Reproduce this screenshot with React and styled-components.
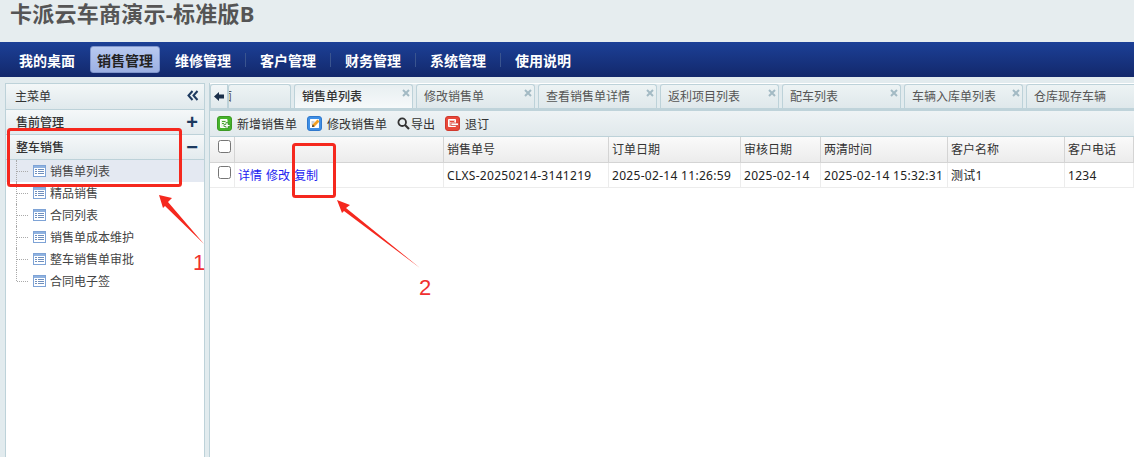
import React from "react"
import styled, { createGlobalStyle } from "styled-components"

const FONT = `"Noto Sans", "Noto Sans CJK SC", sans-serif`

const GlobalStyle = createGlobalStyle`
  html, body {
    margin: 0;
    height: 100%;
    overflow: hidden;
    background: #e2ebee;
    font-family: ${FONT};
    font-size: 12px;
    color: #333;
  }
  * { box-sizing: border-box; }
`

const Page = styled.div`
  position: relative;
  width: 1134px;
  height: 457px;
  display: flex;
  flex-direction: column;
  overflow: hidden;
`

const Header = styled.header`
  height: 42px;
  flex: none;
  padding-left: 10px;
  background: #e6edef;
`

const Title = styled.h1`
  margin: 0;
  font-size: 22px;
  line-height: 27px;
  letter-spacing: 0.25px;
  font-weight: 700;
  color: #555;
`

const NavBar = styled.nav`
  height: 35px;
  flex: none;
  display: flex;
  align-items: center;
  padding-left: 5px;
  background: linear-gradient(#1c4097, #13286b);
`

const NavItem = styled.a`
  width: ${props => (props.$active ? "70px" : "84px")};
  height: ${props => (props.$active ? "27px" : "14px")};
  margin-right: 1px;
  display: flex;
  align-items: center;
  justify-content: center;
  font-size: 14px;
  font-weight: 700;
  color: ${props => (props.$active ? "#222" : "#fff")};
  background: ${props => (props.$active ? "linear-gradient(#b8c9f0, #9cb0e2)" : "none")};
  border: ${props => (props.$active ? "1px solid #7f95cc" : "0")};
  border-radius: ${props => (props.$active ? "3px" : "0")};
  box-shadow: ${props => (props.$sep ? "1px 0 0 #3a548f" : "none")};
`

const Body = styled.div`
  flex: 1;
  min-height: 0;
  display: flex;
  padding-top: 6px;
`

const Sidebar = styled.aside`
  width: 200px;
  flex: none;
  margin-left: 5px;
  background: #fff;
  border: 1px solid #bdd2d9;
  border-bottom: 0;
`

const SideHead = styled.div`
  height: 26px;
  display: flex;
  align-items: center;
  justify-content: space-between;
  padding: 0 5px 2px 9px;
  border-bottom: 1px solid #bdd2d9;
  background: linear-gradient(#f3f7f8, #e0e9ec);
  color: #333;
`

const GroupHead = styled.div`
  height: 25px;
  display: flex;
  align-items: center;
  justify-content: space-between;
  padding: 0 6px 0 10px;
  border-bottom: 1px solid #bdd2d9;
  background: linear-gradient(#f5f8f9, #e3ebee);
  color: #333;
  font-weight: 500;
`

const GroupSign = styled.span`
  font-size: 20px;
  line-height: 20px;
  font-family: "Liberation Sans", sans-serif;
  font-weight: 700;
  color: #1d3a5f;
`

const Tree = styled.ul`
  margin: 0;
  padding: 0;
  list-style: none;
`

const TreeItem = styled.li`
  position: relative;
  height: 22px;
  display: flex;
  align-items: center;
  gap: 4px;
  padding-left: 27px;
  background: ${props => (props.$active ? "#e4e9f2" : "transparent")};
  color: #444;
  &::before {
    content: "";
    position: absolute;
    left: 10px;
    top: 0;
    height: ${props => (props.$last ? "11px" : "22px")};
    border-left: 1px dotted #aaa;
  }
  &::after {
    content: "";
    position: absolute;
    left: 11px;
    top: 11px;
    width: 11px;
    border-top: 1px dotted #aaa;
  }
`

const Main = styled.main`
  width: 925px;
  flex: none;
  margin-left: 4px;
  padding-top: 1px;
  display: flex;
  flex-direction: column;
  background: #fff;
  border-left: 1px solid #bdd2d9;
`

const TabBar = styled.div`
  height: 27px;
  flex: none;
  display: flex;
  gap: 3px;
  align-items: flex-end;
  background: #e2ebee;
  border-bottom: 3px solid #bfd3da;
  overflow: hidden;
`

const ScrollBtn = styled.div`
  width: 18px;
  height: 24px;
  flex: none;
  margin-right: -3px;
  display: flex;
  align-items: center;
  justify-content: center;
  border: 1px solid #bdd2d9;
  border-bottom: 0;
  border-radius: 3px 0 0 0;
  background: linear-gradient(#f3f7f8, #e0e9ec);
`

const Tab = styled.div`
  position: relative;
  width: ${props => props.$width || 119}px;
  height: 24px;
  flex: none;
  padding: 4px 0 0 7px;
  line-height: 16px;
  white-space: nowrap;
  overflow: hidden;
  color: ${props => (props.$active ? "#333" : "#555")};
  font-weight: ${props => (props.$active ? 500 : 400)};
  border: 1px solid #bdd2d9;
  border-bottom: 0;
  border-radius: 3px 3px 0 0;
  background: ${props => (props.$active ? "linear-gradient(#e8eff1, #f6f9fa)" : "linear-gradient(#edf3f4, #dfe8eb)")};
`

const HiddenTabText = styled.span`
  display: block;
  margin-left: -16px;
  color: #555;
`

const TabClose = styled.svg`
  position: absolute;
  top: 4px;
  right: 2px;
  width: 8px;
  height: 8px;
`

const Toolbar = styled.div`
  height: 26px;
  flex: none;
  display: flex;
  align-items: center;
  gap: 10px;
  padding-left: 7px;
  border-bottom: 1px solid #bdd2d9;
  background: linear-gradient(#eef3f5, #e1e9ec);
`

const ToolBtn = styled.a`
  display: flex;
  align-items: center;
  gap: ${props => props.$gap ?? 5}px;
  color: #333;
`

const Grid = styled.div`
  display: grid;
  grid-template-columns: 25px 209px 165px 132px 80px 127px 117px 69px;
`

const HeadCell = styled.div`
  height: 26px;
  padding: 0 0 2px 3px;
  display: flex;
  align-items: center;
  border-right: 1px solid #d4d4d4;
  border-bottom: 1px solid #d4d4d4;
  background: linear-gradient(#fafafa, #ececec);
  color: #333;
  white-space: nowrap;
`

const BodyCell = styled.div`
  height: 25px;
  padding-left: 3px;
  display: flex;
  align-items: center;
  border-right: 1px solid #ececec;
  border-bottom: 1px solid #ececec;
  color: #222;
  white-space: nowrap;
  letter-spacing: 0.3px;
`

const Check = styled.span`
  width: 13px;
  height: 13px;
  align-self: flex-start;
  margin: 3px 0 0 5px;
  border: 1px solid #767676;
  border-radius: 2.5px;
  background: #fff;
`

const ActionLink = styled.a`
  color: #2222f0;
  margin-right: 4px;
  letter-spacing: 0;
`

const Marks = styled.svg`
  position: absolute;
  left: 0;
  top: 0;
  width: 1134px;
  height: 457px;
  pointer-events: none;
`

const MarkNum = styled.span`
  position: absolute;
  left: ${props => props.$x}px;
  top: ${props => props.$y}px;
  color: #f03030;
  font-family: "Liberation Sans", sans-serif;
  font-size: 22px;
  line-height: 26px;
`

const GridIcon = () => (
  <svg width="13" height="12" viewBox="0 0 13 12">
    <rect x="0.5" y="0.5" width="12" height="11" fill="#fff" stroke="#7ea3d6" />
    <rect x="1" y="1" width="11" height="2" fill="#8fb2e0" />
    <path d="M2 4.500h2M5 4.500h6M2 6.500h2M5 6.500h6M2 8.500h2M5 8.500h6" stroke="#6f8fbd" fill="none" />
  </svg>
)

const CloseIcon = () => (
  <TabClose viewBox="0 0 8 8">
    <path d="M1 1l6 6M7 1L1 7" stroke="#a3bac4" strokeWidth="2" fill="none" />
  </TabClose>
)

const AddIcon = () => (
  <svg width="15" height="15" viewBox="0 0 15 15">
    <rect x="0.5" y="0.5" width="14" height="14" rx="2.5" fill="#46b42c" stroke="#3c9a24" />
    <path d="M3.500 3.500h6.500v8H3.500z" fill="#e9f7e2" stroke="#fff" />
    <path d="M5 5.500h3.500M5 7.500h2" stroke="#4aa62f" fill="none" />
    <path d="M9 6.500h2v2h2v2h-2v2H9v-2H7v-2h2z" fill="#fff" stroke="#2f8a1c" strokeWidth="0.7" />
  </svg>
)

const EditIcon = () => (
  <svg width="15" height="15" viewBox="0 0 15 15">
    <rect x="0.5" y="0.5" width="14" height="14" rx="2.5" fill="#3e8fe6" stroke="#2f78cc" />
    <rect x="3" y="3" width="9" height="9" rx="0.5" fill="#fff" />
    <path d="M4.500 6h3M4.500 8h2" stroke="#9ab" fill="none" />
    <path d="M5 11l.6-2.600L10.500 3.500l2 2-4.900 4.900z" fill="#f2a024" />
    <path d="M5 11l.6-2.600 2 2z" fill="#333" />
  </svg>
)

const SearchIcon = () => (
  <svg width="13" height="13" viewBox="0 0 13 13">
    <circle cx="5.2" cy="5.2" r="3.8" fill="none" stroke="#333" strokeWidth="1.8" />
    <path d="M8 8l4 4" stroke="#333" strokeWidth="2.2" />
  </svg>
)

const UndoIcon = () => (
  <svg width="15" height="15" viewBox="0 0 15 15">
    <rect x="0.5" y="0.5" width="14" height="14" rx="2.5" fill="#e8483a" stroke="#d0382c" />
    <path d="M3.500 3.500h7v7h-7z" fill="#f6c9c3" stroke="#fff" />
    <path d="M5 5.500h4" stroke="#e8483a" fill="none" />
    <rect x="6" y="7" width="7.500" height="2.500" fill="#fff" stroke="#d0382c" strokeWidth="0.7" />
  </svg>
)

const treeItems = ["销售单列表", "精品销售", "合同列表", "销售单成本维护", "整车销售单审批", "合同电子签"]
const tabs = ["修改销售单", "查看销售单详情", "返利项目列表", "配车列表", "车辆入库单列表", "仓库现存车辆"]
const columns = ["销售单号", "订单日期", "审核日期", "两清时间", "客户名称", "客户电话"]
const row = ["CLXS-20250214-3141219", "2025-02-14 11:26:59", "2025-02-14", "2025-02-14 15:32:31", "测试1", "1234"]
const navItems = ["维修管理", "客户管理", "财务管理", "系统管理", "使用说明"]

const App = () => (
  <Page>
    <GlobalStyle />
    <Header>
      <Title>卡派云车商演示-标准版B</Title>
    </Header>
    <NavBar>
      <NavItem>我的桌面</NavItem>
      <NavItem $active>销售管理</NavItem>
      {navItems.map((item, i) => (
        <NavItem key={item} $sep={i < 4}>{item}</NavItem>
      ))}
    </NavBar>
    <Body>
      <Sidebar>
        <SideHead>
          主菜单
          <svg width="12" height="11" viewBox="0 0 12 11">
            <path d="M5.500 1L1.500 5.500l4 4.500M10.500 1l-4 4.500 4 4.500" fill="none" stroke="#1d3a5f" strokeWidth="2" />
          </svg>
        </SideHead>
        <GroupHead>售前管理<GroupSign>+</GroupSign></GroupHead>
        <GroupHead>整车销售<GroupSign>−</GroupSign></GroupHead>
        <Tree>
          {treeItems.map((item, i) => (
            <TreeItem key={item} $active={i === 0} $last={i === treeItems.length - 1}>
              <GridIcon />
              {item}
            </TreeItem>
          ))}
        </Tree>
      </Sidebar>
      <Main>
        <TabBar>
          <ScrollBtn>
            <svg width="10" height="9" viewBox="0 0 10 9">
              <path d="M5 0v2.500h5v4H5V9L0 4.500z" fill="#1a2f4a" />
            </svg>
          </ScrollBtn>
          <Tab $width={63}><HiddenTabText>面</HiddenTabText></Tab>
          <Tab $active>销售单列表<CloseIcon /></Tab>
          {tabs.map(tab => (
            <Tab key={tab}>{tab}<CloseIcon /></Tab>
          ))}
        </TabBar>
        <Toolbar>
          <ToolBtn><AddIcon />新增销售单</ToolBtn>
          <ToolBtn><EditIcon />修改销售单</ToolBtn>
          <ToolBtn $gap={1}><SearchIcon />导出</ToolBtn>
          <ToolBtn><UndoIcon />退订</ToolBtn>
        </Toolbar>
        <Grid>
          <HeadCell><Check /></HeadCell>
          <HeadCell />
          {columns.map(col => <HeadCell key={col}>{col}</HeadCell>)}
          <BodyCell><Check /></BodyCell>
          <BodyCell>
            <ActionLink>详情</ActionLink>
            <ActionLink>修改</ActionLink>
            <ActionLink>复制</ActionLink>
          </BodyCell>
          {row.map(value => <BodyCell key={value}>{value}</BodyCell>)}
        </Grid>
      </Main>
    </Body>
    <Marks viewBox="0 0 1134 457">
      <rect x="8.500" y="129.500" width="172" height="56" rx="2" fill="none" stroke="#f5281e" strokeWidth="3" />
      <rect x="293.500" y="144.500" width="41" height="52" rx="2" fill="none" stroke="#f5281e" strokeWidth="3" />
      <path d="M159 195L172 198L168 202L204 244L165 206L163 208z" fill="#f5281e" />
      <path d="M337 200L350 205L346 208L420 268L344 211L342 213z" fill="#f5281e" />
    </Marks>
    <MarkNum $x={193} $y={250}>1</MarkNum>
    <MarkNum $x={419} $y={275}>2</MarkNum>
  </Page>
)

export default App
